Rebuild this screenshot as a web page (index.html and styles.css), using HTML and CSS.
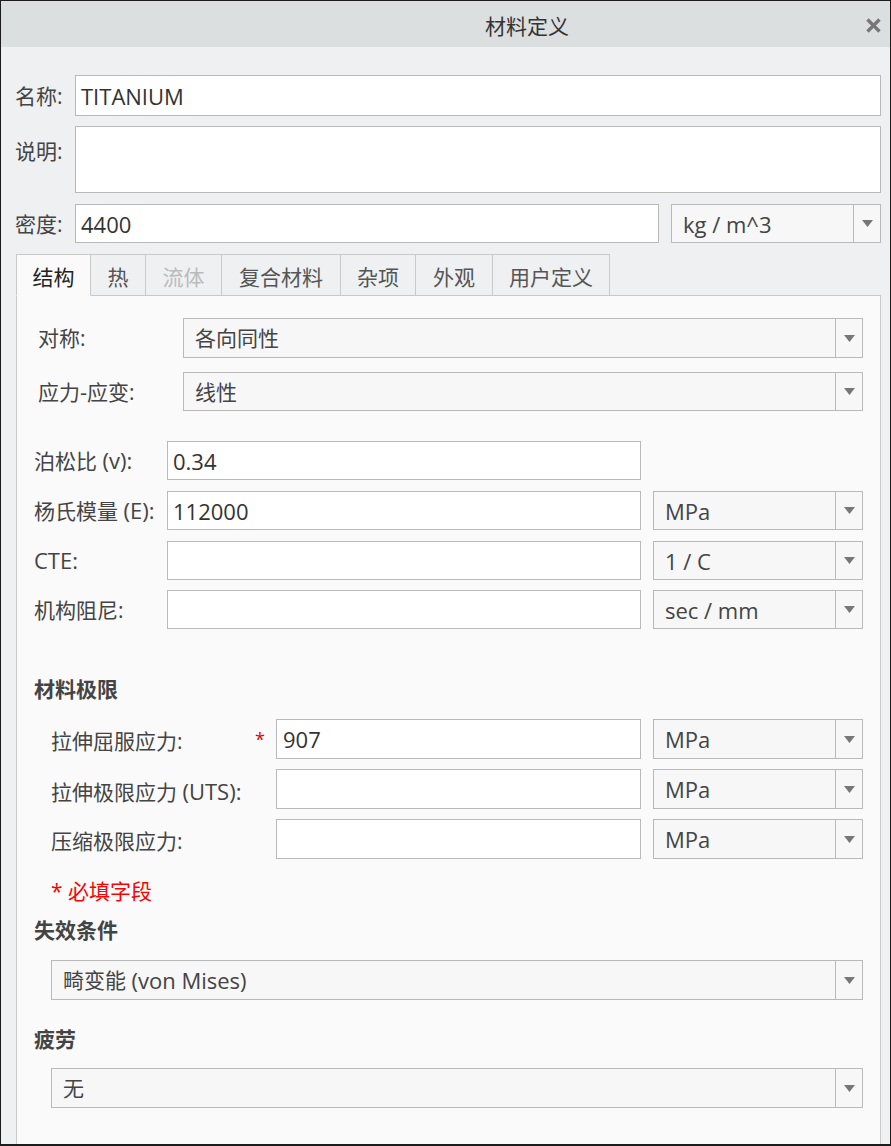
FILE: index.html
```html
<!DOCTYPE html>
<html lang="zh-CN">
<head>
<meta charset="utf-8">
<title>材料定义</title>
<link rel="stylesheet" href="styles.css">
</head>
<body>
<div class="window">
  <div class="titlebar">
    <div class="title">材料定义</div>
    <div class="close">
      <svg width="15" height="15" viewBox="0 0 15 15"><path d="M1.5 1.5 L13.5 13.5 M13.5 1.5 L1.5 13.5" stroke="#777" stroke-width="3.4" stroke-linecap="butt"/></svg>
    </div>
  </div>
  <div class="content">
    <div class="row row-name">
      <div class="lbl">名称:</div>
      <div class="input grow"><span class="lat">TITANIUM</span></div>
    </div>
    <div class="row row-desc">
      <div class="lbl lbl-top">说明:</div>
      <div class="input grow"></div>
    </div>
    <div class="row row-density">
      <div class="lbl">密度:</div>
      <div class="input grow"><span class="lat">4400</span></div>
      <div class="select unit-top"><span class="sel-text"><span class="lat">kg / m^3</span></span><span class="sel-btn"><svg width="11" height="7" viewBox="0 0 11 7"><path d="M0 0 H11 L5.5 7 Z" fill="#777"/></svg></span></div>
    </div>

    <div class="tabs">
      <div class="tab active w75">结构</div>
      <div class="tab w55">热</div>
      <div class="tab disabled w76">流体</div>
      <div class="tab w118">复合材料</div>
      <div class="tab w75">杂项</div>
      <div class="tab w77">外观</div>
      <div class="tab w117">用户定义</div>
    </div>

    <div class="panel">
      <div class="prow prow-a">
        <div class="plbl plbl-a">对称:</div>
        <div class="select grow"><span class="sel-text">各向同性</span><span class="sel-btn"><svg width="11" height="7" viewBox="0 0 11 7"><path d="M0 0 H11 L5.5 7 Z" fill="#777"/></svg></span></div>
      </div>
      <div class="prow prow-b">
        <div class="plbl plbl-a">应力<span class="lat">-</span>应变:</div>
        <div class="select grow"><span class="sel-text">线性</span><span class="sel-btn"><svg width="11" height="7" viewBox="0 0 11 7"><path d="M0 0 H11 L5.5 7 Z" fill="#777"/></svg></span></div>
      </div>

      <div class="prow prow-c">
        <div class="plbl plbl-p">泊松比 <span class="lat">(v):</span></div>
        <div class="input pin"><span class="lat">0.34</span></div>
      </div>
      <div class="prow prow-d">
        <div class="plbl plbl-p">杨氏模量 <span class="lat">(E):</span></div>
        <div class="input pin"><span class="lat">112000</span></div>
        <div class="select unit"><span class="sel-text"><span class="lat">MPa</span></span><span class="sel-btn"><svg width="11" height="7" viewBox="0 0 11 7"><path d="M0 0 H11 L5.5 7 Z" fill="#777"/></svg></span></div>
      </div>
      <div class="prow prow-d">
        <div class="plbl plbl-p"><span class="lat">CTE:</span></div>
        <div class="input pin"></div>
        <div class="select unit"><span class="sel-text"><span class="lat">1 / C</span></span><span class="sel-btn"><svg width="11" height="7" viewBox="0 0 11 7"><path d="M0 0 H11 L5.5 7 Z" fill="#777"/></svg></span></div>
      </div>
      <div class="prow prow-f">
        <div class="plbl plbl-p">机构阻尼:</div>
        <div class="input pin"></div>
        <div class="select unit"><span class="sel-text"><span class="lat">sec / mm</span></span><span class="sel-btn"><svg width="11" height="7" viewBox="0 0 11 7"><path d="M0 0 H11 L5.5 7 Z" fill="#777"/></svg></span></div>
      </div>

      <div class="heading h-limits">材料极限</div>
      <div class="prow prow-g">
        <div class="plbl plbl-s">拉伸屈服应力:</div>
        <div class="star">*</div>
        <div class="input sin"><span class="lat">907</span></div>
        <div class="select unit"><span class="sel-text"><span class="lat">MPa</span></span><span class="sel-btn"><svg width="11" height="7" viewBox="0 0 11 7"><path d="M0 0 H11 L5.5 7 Z" fill="#777"/></svg></span></div>
      </div>
      <div class="prow prow-h">
        <div class="plbl plbl-s">拉伸极限应力 <span class="lat">(UTS):</span></div>
        <div class="star"></div>
        <div class="input sin"></div>
        <div class="select unit"><span class="sel-text"><span class="lat">MPa</span></span><span class="sel-btn"><svg width="11" height="7" viewBox="0 0 11 7"><path d="M0 0 H11 L5.5 7 Z" fill="#777"/></svg></span></div>
      </div>
      <div class="prow prow-h">
        <div class="plbl plbl-s">压缩极限应力:</div>
        <div class="star"></div>
        <div class="input sin"></div>
        <div class="select unit"><span class="sel-text"><span class="lat">MPa</span></span><span class="sel-btn"><svg width="11" height="7" viewBox="0 0 11 7"><path d="M0 0 H11 L5.5 7 Z" fill="#777"/></svg></span></div>
      </div>
      <div class="note">* 必填字段</div>

      <div class="heading h-fail">失效条件</div>
      <div class="prow prow-full1">
        <div class="select grow"><span class="sel-text">畸变能&nbsp;<span class="lat">(von Mises)</span></span><span class="sel-btn"><svg width="11" height="7" viewBox="0 0 11 7"><path d="M0 0 H11 L5.5 7 Z" fill="#777"/></svg></span></div>
      </div>
      <div class="heading h-fatigue">疲劳</div>
      <div class="prow prow-full2">
        <div class="select grow"><span class="sel-text">无</span><span class="sel-btn"><svg width="11" height="7" viewBox="0 0 11 7"><path d="M0 0 H11 L5.5 7 Z" fill="#777"/></svg></span></div>
      </div>
    </div>
  </div>
</div>
</body>
</html>
```
FILE: styles.css
```css
* { box-sizing: border-box; }
html, body { margin: 0; padding: 0; }
body {
  font-family: "Open Sans", "Noto Sans CJK SC", sans-serif;
  font-size: 21px;
  color: #444;
  background: #eef0f1;
}
.lat { font-size: 22px; }
.window {
  width: 891px;
  height: 1146px;
  border: 1px solid #1c1c1c;
  border-bottom-width: 2px;
  background: #eef0f1;
  display: flex;
  flex-direction: column;
  overflow: hidden;
}
.titlebar {
  height: 46px;
  background: #dcdfe0;
  display: flex;
  align-items: center;
  flex-shrink: 0;
  padding-top: 4px;
}
.title {
  flex: 1;
  text-align: center;
  padding-left: 192px;
  color: #333;
  font-size: 21px;
  line-height: 24px;
}
.close {
  width: 24px;
  margin-right: 5px;
  display: flex;
  justify-content: center;
  align-items: center;
  padding-bottom: 2px;
}
.content {
  flex: 1;
  display: flex;
  flex-direction: column;
  padding: 0 9px 0 14px;
}
.row { display: flex; align-items: center; }
.row-name { margin-top: 28px; height: 41px; }
.row-desc { margin-top: 10px; height: 67px; align-items: flex-start; }
.row-density { margin-top: 11px; height: 39px; }
.lbl { width: 60px; line-height: 24px; color: #444; flex-shrink: 0; white-space: nowrap; }
.lbl-top { padding-top: 13px; }
.grow { flex: 1; }
.input {
  height: 100%;
  background: #fff;
  border: 1px solid #b9b9b9;
  padding-left: 5px;
  display: flex;
  align-items: center;
  color: #333;
  line-height: 24px;
}
.select {
  height: 100%;
  background: #f7f7f7;
  border: 1px solid #b9b9b9;
  display: flex;
  align-items: stretch;
  color: #444;
}
.sel-text {
  flex: 1;
  padding-left: 11px;
  display: flex;
  align-items: center;
  line-height: 24px;
  white-space: pre;
}
.sel-btn {
  width: 27px;
  border-left: 1px solid #b9b9b9;
  display: flex;
  align-items: center;
  justify-content: center;
}
.unit-top { width: 210px; margin-left: 12px; }

.tabs {
  margin-top: 11px;
  margin-left: 1px;
  display: flex;
  height: 42px;
  position: relative;
  z-index: 1;
  margin-bottom: -1px;
}
.tab {
  height: 42px;
  border: 1px solid #c9c9c9;
  border-left: none;
  background: #eef0f1;
  color: #555;
  display: flex;
  align-items: center;
  justify-content: center;
  line-height: 24px;
  padding-top: 3px;
}
.tab:first-child { border-left: 1px solid #c9c9c9; }
.tab.active { background: #fafafa; border-bottom-color: #fafafa; color: #222; }
.tab.disabled { color: #bbb; }
.w75 { width: 75px; }
.w55 { width: 55px; }
.w76 { width: 76px; }
.w118 { width: 119px; }
.w77 { width: 77px; }
.w117 { width: 117px; }

.panel {
  flex: 1;
  margin-left: 1px;
  background: #fafafa;
  border: 1px solid #c9c9c9;
  border-bottom: none;
  padding: 22px 17px 0 0;
  display: flex;
  flex-direction: column;
}
.prow { display: flex; align-items: center; flex-shrink: 0; }
.prow-a { height: 40px; }
.prow-b { height: 39px; margin-top: 14px; }
.prow-c { height: 39px; margin-top: 30px; }
.prow-d { height: 39px; margin-top: 11px; }
.prow-f { height: 39px; margin-top: 10px; }
.prow-g { height: 40px; margin-top: 18px; }
.prow-h { height: 40px; margin-top: 10px; }
.prow-full1 { height: 40px; margin-top: 18px; padding-left: 34px; }
.prow-full2 { height: 40px; margin-top: 17px; padding-left: 34px; }
.plbl { flex-shrink: 0; line-height: 24px; color: #444; white-space: nowrap; }
.plbl-a { width: 166px; padding-left: 21px; }
.plbl-p { width: 150px; padding-left: 17px; }
.plbl-s { width: 238px; padding-left: 34px; padding-top: 4px; }
.pin { width: 474px; flex-shrink: 0; }
.sin { width: 365px; flex-shrink: 0; padding-left: 6px; }
.star { width: 21px; flex-shrink: 0; color: #e00000; font-size: 18px; line-height: 24px; }
.unit { width: 210px; margin-left: 12px; flex-shrink: 0; }
.heading {
  font-weight: bold;
  line-height: 24px;
  padding-left: 17px;
  color: #444;
}
.h-limits { margin-top: 48px; }
.h-fail { margin-top: 15px; }
.h-fatigue { margin-top: 27px; }
.note {
  margin-top: 20px;
  padding-left: 34px;
  color: #f00;
  line-height: 24px;
}
```
